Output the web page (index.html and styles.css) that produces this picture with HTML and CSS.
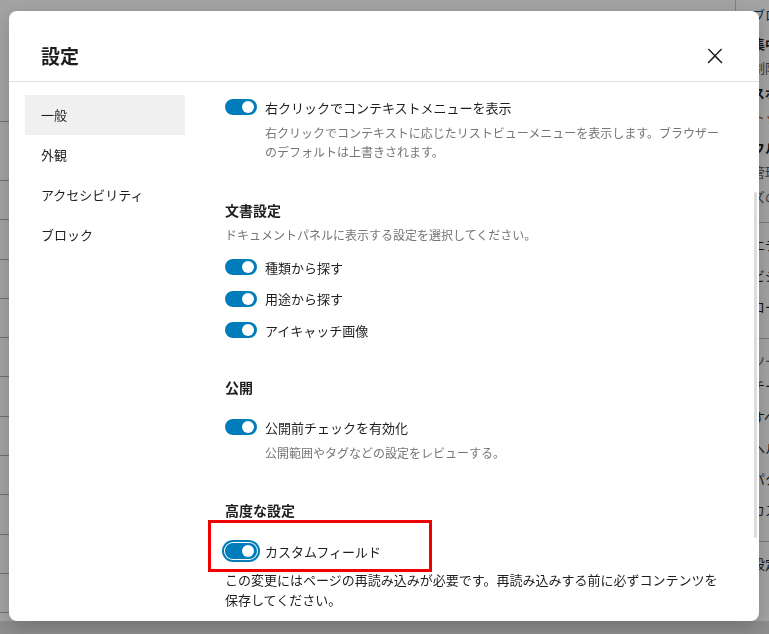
FILE: index.html
```html
<!DOCTYPE html>
<html lang="ja">
<head>
<meta charset="utf-8">
<title>設定</title>
<link rel="stylesheet" href="styles.css">
</head>
<body>
<div class="page">
  <div class="list">
    <div class="list-head"></div>
    <div class="list-row tall"></div>
    <div class="list-row"></div>
    <div class="list-row"></div>
    <div class="list-row"></div>
    <div class="list-row"></div>
    <div class="list-row"></div>
    <div class="list-row"></div>
    <div class="list-row"></div>
    <div class="list-row"></div>
    <div class="list-row"></div>
    <div class="list-row"></div>
    <div class="list-row"></div>
  </div>
  <aside class="menu">
    <div class="mi blue">ブロックツール</div>
    <div class="mi bold">集中モード</div>
    <div class="mi gray">制限されたブロックに集中</div>
    <div class="mi bold">スポットライトモード</div>
    <div class="mi orange">トップツールバー</div>
    <div class="mi bold">フルスクリーンモード</div>
    <div class="mi gray">管理画面のサイドバーを</div>
    <div class="mi gray">ズの表示</div>
    <div class="msep"></div>
    <div class="mi">エディター</div>
    <div class="mi">ビジュアルエディター</div>
    <div class="mi">コードエディター</div>
    <div class="msep"></div>
    <div class="mi gray">ツール</div>
    <div class="mi">チーム</div>
    <div class="mi">すべてのブロック</div>
    <div class="mi">ヘルプ</div>
    <div class="mi">パターンを管理</div>
    <div class="mi">カスタムフィールド</div>
    <div class="msep"></div>
    <div class="mi">設定</div>
  </aside>
</div>
<div class="footer-strip"></div>
<div class="overlay"></div>

<div class="modal" role="dialog" aria-label="設定">
  <header class="modal-head">
    <h1 class="title">設定</h1>
    <button class="close" aria-label="閉じる">
      <svg viewBox="0 0 24 24" width="24" height="24" aria-hidden="true"><path d="M13 11.8l6.1-6.3-1-1-6.1 6.2-6.1-6.2-1 1 6.1 6.3-6.5 6.7 1 1 6.5-6.6 6.5 6.6 1-1z" fill="#1e1e1e"/></svg>
    </button>
  </header>
  <div class="modal-body">
    <nav class="side">
      <div class="tab active">一般</div>
      <div class="tab">外観</div>
      <div class="tab">アクセシビリティ</div>
      <div class="tab">ブロック</div>
    </nav>
    <div class="content">
      <div class="row first"><span class="toggle"></span><span>右クリックでコンテキストメニューを表示</span></div>
      <p class="help">右クリックでコンテキストに応じたリストビューメニューを表示します。ブラウザーのデフォルトは上書きされます。</p>

      <h2 class="sec s2">文書設定</h2>
      <p class="sec-desc">ドキュメントパネルに表示する設定を選択してください。</p>
      <div class="row r-a"><span class="toggle"></span><span>種類から探す</span></div>
      <div class="row r-b"><span class="toggle"></span><span>用途から探す</span></div>
      <div class="row r-b"><span class="toggle"></span><span>アイキャッチ画像</span></div>

      <h2 class="sec s3">公開</h2>
      <div class="row r-c"><span class="toggle"></span><span>公開前チェックを有効化</span></div>
      <p class="help">公開範囲やタグなどの設定をレビューする。</p>

      <h2 class="sec s4">高度な設定</h2>
      <div class="row r-d"><span class="toggle focus"></span><span>カスタムフィールド</span></div>
      <p class="note">この変更にはページの再読み込みが必要です。再読み込みする前に必ずコンテンツを保存してください。</p>
    </div>
  </div>
  <div class="scroll-thumb"></div>
  <div class="highlight"></div>
</div>
</body>
</html>
```
FILE: styles.css
```css
* { box-sizing: border-box; }
html, body {
  margin: 0;
  padding: 0;
  width: 769px;
  height: 634px;
  overflow: hidden;
  font-family: "Noto Sans CJK JP", "Noto Sans", sans-serif;
  color: #1e1e1e;
}
body { background: #fff; }

/* underlying page */
.page {
  display: flex;
  height: 621px;
}
.list {
  flex: 0 0 735px;
}
.list-head {
  height: 122px;
  border-bottom: 1px solid #b0b0b0;
}
.list-row {
  height: 39.3px;
  border-bottom: 1px solid #b0b0b0;
}
.list-row.tall { height: 59px; }
.menu {
  flex: 0 0 34px;
  overflow: hidden;
  border-left: 1px solid #c8c8c8;
  padding: 5px 0 0 16px;
  font-size: 13px;
  white-space: nowrap;
}
.mi { height: 31px; line-height: 20px; overflow: hidden; }
.mi.blue { color: #1d3d7a; height: 29px; }
.mi.bold { font-weight: 700; height: 24px; }
.mi.gray { color: #5a5a5a; height: 25px; }
.mi.orange { color: #b85a00; }
.msep { height: 1px; background: #c0c0c0; margin: 10px 0 12px -16px; }
.footer-strip {
  height: 13px;
  background: #dcdcdc;
}
.overlay {
  position: fixed;
  inset: 0;
  background: rgba(0, 0, 0, 0.36);
}

/* modal */
.modal {
  position: fixed;
  left: 9px;
  top: 11px;
  width: 750px;
  height: 610px;
  background: #fff;
  border-radius: 8px;
  box-shadow: 0 6px 20px rgba(0, 0, 0, 0.2);
  overflow: hidden;
  display: flex;
  flex-direction: column;
}
.modal-head {
  flex: 0 0 71px;
  display: flex;
  align-items: center;
  justify-content: space-between;
  padding: 20px 20px 0 32px;
  border-bottom: 1px solid #e0e0e0;
}
.title {
  margin: 0;
  font-size: 19px;
  font-weight: 700;
  line-height: 24px;
}
.close {
  border: 0;
  background: none;
  padding: 0;
  width: 24px;
  height: 24px;
  margin-right: 12px;
  margin-top: -1px;
  display: flex;
}
.modal-body {
  flex: 1;
  display: flex;
  min-height: 0;
}
.side {
  flex: 0 0 176px;
  padding: 13px 0 0 16px;
}
.tab {
  width: 160px;
  height: 40px;
  line-height: 40px;
  padding-left: 16px;
  font-size: 13px;
}
.tab.active { background: #f0f0f0; }

.content {
  flex: 1;
  padding: 15px 32px 0 40px;
}
.row {
  display: flex;
  align-items: center;
  gap: 8px;
  height: 20px;
  font-size: 13px;
}
.toggle {
  flex: 0 0 32px;
  height: 16px;
  border-radius: 8px;
  background: #007cba;
  position: relative;
}
.toggle::after {
  content: "";
  position: absolute;
  right: 3px;
  top: 2px;
  width: 12px;
  height: 12px;
  border-radius: 50%;
  background: #fff;
}
.toggle.focus {
  box-shadow: 0 0 0 1px #fff, 0 0 0 3px #007cba;
}
.help {
  margin: 5.5px 0 0 40px;
  font-size: 12px;
  line-height: 19px;
  color: #757575;
}
.sec {
  margin: 0;
  font-size: 14px;
  font-weight: 700;
  line-height: 20px;
}
.s2 { margin-top: 39.5px; }
.s3 { margin-top: 37px; }
.s4 { margin-top: 38.5px; }
.sec-desc {
  margin: 4.5px 0 0;
  font-size: 12px;
  line-height: 19px;
  color: #757575;
}
.r-a { margin-top: 13.5px; }
.r-b { margin-top: 11.5px; }
.r-c { margin-top: 20px; }
.r-d { margin-top: 21px; }
.note {
  margin: 9px 0 0;
  font-size: 13px;
  line-height: 20px;
  color: #1e1e1e;
}

.scroll-thumb {
  position: absolute;
  left: 745px;
  top: 181px;
  width: 3px;
  height: 346px;
  background: #dcdcdc;
  border-radius: 2px;
}
.highlight {
  position: absolute;
  left: 199px;
  top: 509px;
  width: 224px;
  height: 52px;
  border: 3px solid #f00000;
}
```
